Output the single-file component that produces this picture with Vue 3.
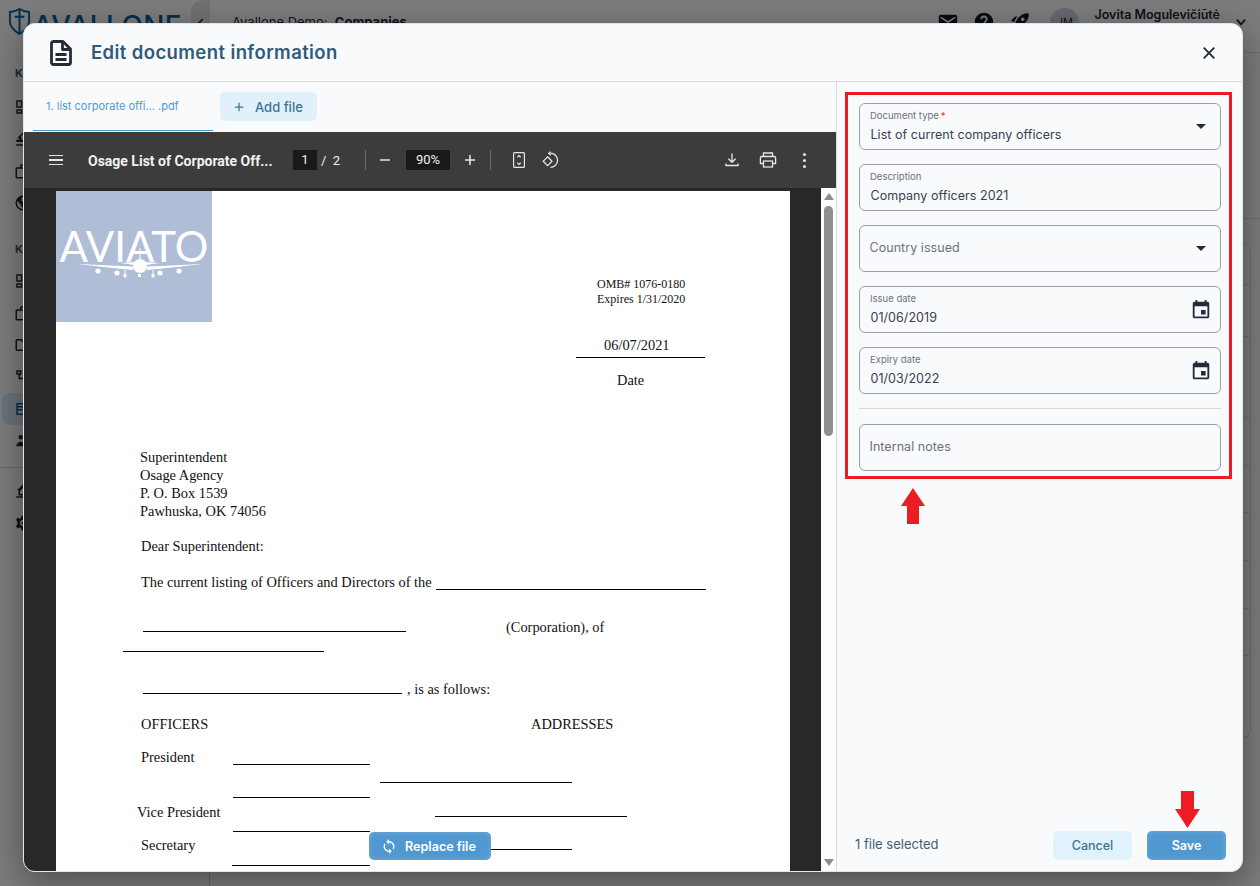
<script setup>
const icons = {
  grid: 'M19 5v2h-4V5h4M9 5v6H5V5h4m10 8v6h-4v-6h4M9 17v2H5v-2h4M21 3h-8v6h8V3zM11 3H3v10h8V3zm10 8h-8v10h8V11zm-10 4H3v6h8v-6z',
  edit: 'M12 3L4 11h3v2H3v3h18v-3h-4v-2h3zm0 3l3 3h-1v4h-4V9H9zM3 19h18v2H3z',
  case: 'M20 7h-4V5c0-1.1-.9-2-2-2h-4c-1.1 0-2 .9-2 2v2H4c-1.1 0-2 .9-2 2v11c0 1.1.9 2 2 2h16c1.1 0 2-.9 2-2V9c0-1.1-.9-2-2-2zM10 5h4v2h-4V5zm10 15H4V9h16v11z',
  globe: 'M12 2a10 10 0 1 0 0 20 10 10 0 0 0 0-20zm0 18a8 8 0 0 1-8-8c0-1 .2-2 .5-2.800L9 14v1c0 1.100.9 2 2 2zm1-16a8 8 0 0 1 6 3h-3v2l-3 2-3-2V5c1-.6 2-1 3-1z',
  folder: 'M20 6h-8l-2-2H4c-1.100 0-2 .9-2 2v12c0 1.100.9 2 2 2h16c1.100 0 2-.9 2-2V8c0-1.100-.9-2-2-2zm0 12H4V6h5.170l2 2H20v10z',
  tree: 'M3 3h7v6H3zm2 2v2h3V5zm9 6h7v6h-7zm2 2v2h3v-2zM6 9h2v4h6v2H6z',
  doc: 'M3 4h18v16H3zm2 2v2h14V6zm0 4v2h14v-2zm0 4v4h14v-4z',
  people: 'M9 4a3 3 0 1 1 0 6 3 3 0 0 1 0-6zm8 2a2.500 2.500 0 1 1 0 5 2.500 2.500 0 0 1 0-5zM3 19c0-3 3-6 6-6s6 3 6 6zm13 0c0-2-.5-4-2-5.500 3-1 7 1.500 7 5.500z',
  upload: 'M3 21h18v-2H3zM8 12l4-4 4 4v4H8zM12 3L4 11h2v7h12v-7h2z',
  gear: 'M12 8a4 4 0 1 0 0 8 4 4 0 0 0 0-8zm0 2a2 2 0 1 1 0 4 2 2 0 0 1 0-4zM10 2h4l.5 3 2 1 2.500-1.500 2.500 3.500-2 2v4l2 2-2.500 3.500L16.500 18l-2 1-.5 3h-4l-.5-3-2-1L5 19.500 2.500 16l2-2v-4l-2-2L5 4.500 7.500 6l2-1z'
}
const sideTop = ['grid', 'edit', 'case', 'globe']
const sideMid = ['grid', 'case', 'folder', 'tree', 'doc', 'people']
const sideBottom = ['upload', 'gear']
const backRows = [41, 52, 81, 48, 47, 48, 48, 47, 82]

const fields = [
  { label: 'Document type', value: 'List of current company officers', required: true, icon: 'caret' },
  { label: 'Description', value: 'Company officers 2021' },
  { placeholder: 'Country issued', icon: 'caret' },
  { label: 'Issue date', value: '01/06/2019', icon: 'date' },
  { label: 'Expiry date', value: '01/03/2022', icon: 'date' }
]

// pdf page content, coordinates on the page sheet
const pageTexts = [
  { s: 'OMB# 1076-0180', x: 541, y: 85, small: true },
  { s: 'Expires 1/31/2020', x: 541, y: 100, small: true },
  { s: '06/07/2021', x: 548, y: 146 },
  { s: 'Date', x: 561, y: 181 },
  { s: 'Superintendent', x: 84, y: 258 },
  { s: 'Osage Agency', x: 84, y: 276 },
  { s: 'P. O. Box 1539', x: 84, y: 294 },
  { s: 'Pawhuska, OK 74056', x: 84, y: 312 },
  { s: 'Dear Superintendent:', x: 85, y: 347 },
  { s: 'The current listing of Officers and Directors of the', x: 85, y: 383 },
  { s: '(Corporation), of', x: 450, y: 428 },
  { s: ', is as follows:', x: 351, y: 490 },
  { s: 'OFFICERS', x: 85, y: 525 },
  { s: 'ADDRESSES', x: 475, y: 525 },
  { s: 'President', x: 85, y: 558 },
  { s: 'Vice President', x: 81, y: 613 },
  { s: 'Secretary', x: 85, y: 646 }
]
const pageLines = [
  { x: 520, y: 166, w: 129 },
  { x: 380, y: 398, w: 270 },
  { x: 87, y: 440, w: 263 },
  { x: 67, y: 460, w: 201 },
  { x: 87, y: 502, w: 259 },
  { x: 177, y: 573, w: 137 },
  { x: 324, y: 591, w: 192 },
  { x: 177, y: 606, w: 137 },
  { x: 379, y: 625, w: 192 },
  { x: 177, y: 640, w: 137 },
  { x: 324, y: 658, w: 192 },
  { x: 176, y: 674, w: 138 }
]
</script>

<template>
  <div class="app">
    <aside class="sidebar">
      <div class="brand">
        <svg class="shield" viewBox="0 0 24 28" fill="none" stroke="currentColor" stroke-width="2">
          <path d="M2 4c4 0 7-1 10-3 3 2 6 3 10 3v10c0 6-5 10-10 13C7 24 2 20 2 14z" />
          <path d="M12 1v26M7 9h10" />
        </svg>
        <span>AVALLONE</span>
      </div>
      <div class="side-toggle">
        <svg viewBox="0 0 8 12" fill="none" stroke="#1f2937" stroke-width="1.800"><path d="M6.500 1L1.500 6l5 5" /></svg>
      </div>
      <div class="side-label">K</div>
      <div v-for="name in sideTop" :key="name" class="side-item">
        <svg viewBox="0 0 24 24"><path :d="icons[name]" /></svg>
      </div>
      <div class="side-label second">K</div>
      <div v-for="name in sideMid" :key="name" class="side-item" :class="{ current: name === 'doc' }">
        <svg viewBox="0 0 24 24"><path :d="icons[name]" /></svg>
      </div>
      <div class="side-rule"></div>
      <div v-for="name in sideBottom" :key="name" class="side-item">
        <svg viewBox="0 0 24 24"><path :d="icons[name]" /></svg>
      </div>
    </aside>

    <div class="main">
      <header class="topbar">
        <span class="crumb">Avallone Demo:&nbsp; <b>Companies</b></span>
        <div class="top-right">
          <svg class="top-icon" viewBox="0 0 24 24"><path d="M20 4H4c-1.100 0-1.990.9-1.990 2L2 18c0 1.100.9 2 2 2h16c1.100 0 2-.9 2-2V6c0-1.100-.9-2-2-2zm0 4l-8 5-8-5V6l8 5 8-5v2z" /></svg>
          <svg class="top-icon" viewBox="0 0 24 24"><path d="M12 2C6.480 2 2 6.480 2 12s4.480 10 10 10 10-4.480 10-10S17.520 2 12 2zm1 17h-2v-2h2v2zm2.070-7.750l-.9.920C13.450 12.900 13 13.500 13 15h-2v-.5c0-1.100.450-2.100 1.170-2.830l1.240-1.260c.370-.360.590-.860.590-1.410 0-1.100-.9-2-2-2s-2 .9-2 2H8c0-2.210 1.790-4 4-4s4 1.790 4 4c0 .880-.360 1.680-.930 2.250z" /></svg>
          <svg class="top-icon" viewBox="0 0 24 24"><path d="M9.190 6.350c-2.040 2.290-3.440 5.580-3.570 5.890L2 10.690l4.050-4.050c.470-.470 1.150-.680 1.810-.550l1.330.260zM11.170 17s3.740-1.550 5.890-3.700c5.400-5.400 4.500-9.620 4.210-10.570-.950-.300-5.170-1.190-10.570 4.210C8.550 9.090 7 12.830 7 12.830L11.170 17zm6.480-2.190c-2.290 2.040-5.580 3.440-5.890 3.570L13.310 22l4.050-4.050c.470-.470.680-1.150.550-1.810l-.260-1.330zM9 18c0 .830-.340 1.580-.880 2.120C6.940 21.300 2 22 2 22s.7-4.940 1.880-6.120C4.420 15.340 5.170 15 6 15c1.660 0 3 1.340 3 3zm4-9c0-1.100.9-2 2-2s2 .9 2 2-.9 2-2 2-2-.9-2-2z" /></svg>
          <span class="avatar">JM</span>
          <span class="user">Jovita Mogulevičiūtė</span>
          <svg class="chev" viewBox="0 0 24 24" fill="none" stroke="currentColor" stroke-width="3"><path d="M5 8l7 8 7-8" /></svg>
        </div>
      </header>
      <div class="back-rule"></div>
      <div class="back-rule lower"></div>
      <section class="back-card">
        <div v-for="(h, i) in backRows" :key="i" class="back-row" :style="{ height: h + 'px' }"></div>
      </section>
    </div>

    <div class="scrim">
      <div class="modal">
        <header class="modal-head">
          <svg class="doc-icon" viewBox="0 0 22 26" fill="none" stroke="#262b38" stroke-width="2.800" stroke-linejoin="round">
            <path d="M3.500 1.500h9.500l7.500 7.500v13.500a2 2 0 0 1-2 2h-15a2 2 0 0 1-2-2v-19a2 2 0 0 1 2-2z" />
            <path d="M12.500 1.500v8h8M5.500 14.500h11M5.500 19.500h11" />
          </svg>
          <h1>Edit document information</h1>
          <svg class="close" viewBox="0 0 12 12" fill="none" stroke="#232838" stroke-width="1.800"><path d="M.7.7l10.600 10.600M11.300.7L.7 11.300" /></svg>
        </header>

        <div class="modal-body">
          <div class="left">
            <div class="tabs">
              <div class="tab">1. list corporate offi... .pdf</div>
              <button class="add-file">
                <svg viewBox="0 0 12 12" fill="none" stroke="currentColor" stroke-width="1.500"><path d="M6 1v10M1 6h10" /></svg>
                Add file
              </button>
            </div>

            <div class="pdf-bar">
              <div class="burger"><i></i><i></i><i></i></div>
              <span class="pdf-title">Osage List of Corporate Off...</span>
              <span class="box page-box">1</span>
              <span class="page-of">/&nbsp; 2</span>
              <span class="bar-sep first"></span>
              <svg class="bar-icon minus" viewBox="0 0 12 12" stroke="#e6e6e6" stroke-width="1.600"><path d="M1 6h10" /></svg>
              <span class="box zoom-box">90%</span>
              <svg class="bar-icon plus" viewBox="0 0 12 12" stroke="#e6e6e6" stroke-width="1.600"><path d="M1 6h10M6 1v10" /></svg>
              <span class="bar-sep second"></span>
              <svg class="bar-icon fit" viewBox="0 0 14 18" fill="none" stroke="#e6e6e6" stroke-width="1.200">
                <rect x="1.600" y="1.600" width="10.800" height="14.800" rx="1" />
                <path d="M5.300 6.200L7 4.600l1.700 1.600M5.300 11.800L7 13.400l1.700-1.600" />
              </svg>
              <svg class="bar-icon rotate" viewBox="0 0 18 18" fill="none" stroke="#e6e6e6" stroke-width="1.300">
                <path d="M5.600 5.800L10 10.200 5.600 14.600 1.200 10.200z" />
                <path d="M8.400 2.200A7 7 0 1 1 8.500 16.400M8.600.6L6.800 2.500l2.200 1.700" />
              </svg>
              <span class="bar-gap"></span>
              <svg class="bar-icon save" viewBox="0 0 14 14" fill="none" stroke="#e6e6e6" stroke-width="1.300">
                <path d="M7 .5v8.500M3.400 5.800L7 9.300l3.600-3.500M1 10.500v2h12v-2" />
              </svg>
              <svg class="bar-icon print" viewBox="0 0 18 16" fill="none" stroke="#e6e6e6" stroke-width="1.300">
                <path d="M4.500 4.500V1h9v3.500M4.500 11.500H1.400V5.700a1.200 1.200 0 0 1 1.200-1.200h12.800a1.200 1.200 0 0 1 1.200 1.200v5.800h-3.100" />
                <rect x="4.500" y="9" width="9" height="6" />
              </svg>
              <div class="dots"><i></i><i></i><i></i></div>
            </div>

            <div class="viewer">
              <div class="sheet-area">
                <div class="sheet">
                  <div class="aviato">
                    <span>AVIATO</span>
                    <svg viewBox="0 0 124 22" fill="#fff">
                      <path d="M0 5C20 6 42 7 55 7.500V11C42 10 20 7.500 0 5zM124 5C104 6 82 7 69 7.500V11C82 10 104 7.500 124 5z" />
                      <circle cx="62" cy="7" r="7" />
                      <path d="M42 4l15-1v3zM82 4l-15-1v3z" />
                      <rect x="61.500" y="-11" width="1" height="12" />
                      <circle cx="20" cy="12" r="2.600" /><circle cx="39" cy="14" r="2.600" />
                      <circle cx="82" cy="14" r="2.600" /><circle cx="101" cy="12" r="2.600" />
                      <rect x="46.500" y="11" width="1" height="8" /><rect x="74.500" y="11" width="1" height="8" />
                      <rect x="45.500" y="15" width="3" height="3" /><rect x="73.500" y="15" width="3" height="3" /><rect x="60" y="15" width="3" height="3" />
                    </svg>
                  </div>
                  <span
                    v-for="t in pageTexts"
                    :key="t.s"
                    class="doc-text"
                    :class="{ small: t.small }"
                    :style="{ left: t.x + 'px', top: t.y + 'px' }"
                  >{{ t.s }}</span>
                  <i
                    v-for="l in pageLines"
                    :key="l.x + '-' + l.y"
                    class="doc-line"
                    :style="{ left: l.x + 'px', top: l.y + 'px', width: l.w + 'px' }"
                  ></i>
                </div>
              </div>
              <div class="scrollbar">
                <i class="arrow up"></i>
                <i class="thumb"></i>
                <i class="arrow down"></i>
              </div>
              <button class="replace">
                <svg viewBox="4 1 16 22" fill="#fff"><path d="M12 4V1L8 5l4 4V6c3.310 0 6 2.690 6 6 0 1.010-.250 1.970-.7 2.800l1.460 1.460C19.540 15.030 20 13.570 20 12c0-4.420-3.580-8-8-8zm0 14c-3.310 0-6-2.690-6-6 0-1.010.250-1.970.7-2.800L5.240 7.740C4.460 8.970 4 10.430 4 12c0 4.420 3.580 8 8 8v3l4-4-4-4v3z" /></svg>
                Replace file
              </button>
            </div>
          </div>

          <div class="right">
            <div class="form-box">
              <div v-for="f in fields" :key="f.label || f.placeholder" class="field">
                <div class="field-text">
                  <template v-if="f.label">
                    <span class="field-label">{{ f.label }}<em v-if="f.required">*</em></span>
                    <span class="field-value">{{ f.value }}</span>
                  </template>
                  <span v-else class="field-placeholder">{{ f.placeholder }}</span>
                </div>
                <i v-if="f.icon === 'caret'" class="caret"></i>
                <svg v-if="f.icon === 'date'" class="date-icon" viewBox="0 0 24 24" fill="#232a3a">
                  <path d="M17 12h-5v5h5v-5zM16 1v2H8V1H6v2H5c-1.110 0-1.990.9-1.990 2L3 19c0 1.100.890 2 2 2h14c1.100 0 2-.9 2-2V5c0-1.100-.9-2-2-2h-1V1h-2zm3 18H5V8h14v11z" />
                </svg>
              </div>
              <div class="form-rule"></div>
              <div class="field">
                <div class="field-text"><span class="field-placeholder">Internal notes</span></div>
              </div>
            </div>

            <footer class="foot">
              <span class="count">1 file selected</span>
              <button class="btn cancel">Cancel</button>
              <button class="btn primary">Save</button>
            </footer>
          </div>
        </div>

        <svg class="red-arrow arrow-up" viewBox="0 0 24 36" fill="#ed1c24"><path d="M12 0l12 18h-6v18H6V18H0z" /></svg>
        <svg class="red-arrow arrow-down" viewBox="0 0 25 37" fill="#ed1c24"><path d="M6 0h13v18h6L12.500 37 0 18h6z" /></svg>
      </div>
    </div>
  </div>
</template>

<style scoped>
.app {
  position: relative;
  display: flex;
  height: 886px;
  overflow: hidden;
  background: #f8f9fb;
  font-family: Inter, "Liberation Sans", sans-serif;
  color: #1f2937;
}

.sidebar {
  position: relative;
  width: 209px;
  border-right: 1px solid #c8ccd0;
  flex-shrink: 0;
}

.brand {
  display: flex;
  gap: 2px;
  height: 66px;
  box-sizing: border-box;
  padding: 8px 0 0 8px;
  color: #0a5f94;
  font-size: 28px;
  font-weight: 500;
  line-height: 36px;
  letter-spacing: 0.4px;
}

.shield {
  width: 23px;
  height: 27px;
}

.side-toggle {
  position: absolute;
  top: 0;
  right: -1px;
  display: flex;
  align-items: center;
  justify-content: center;
  width: 19px;
  height: 38px;
  padding-top: 8px;
  box-sizing: border-box;
  border-radius: 12px 0 0 12px;
  background: #dfe1e4;
}

.side-toggle svg {
  width: 7px;
  height: 11px;
}

.side-label {
  height: 14px;
  margin: 0 0 11px 15px;
  font-size: 11px;
  line-height: 14px;
  font-weight: 700;
  color: #4b5563;
}

.side-label.second {
  margin-top: 23px;
  margin-bottom: 9px;
}

.side-item {
  display: flex;
  align-items: center;
  height: 32px;
  margin: 0 8px 0 2px;
  padding-left: 12px;
  border-radius: 8px;
}

.side-item svg {
  width: 18px;
  height: 18px;
  fill: #1f2937;
}

.side-item.current {
  background: #d4e6f2;
}

.side-item.current svg {
  fill: #0a5f94;
}

.side-rule {
  height: 1px;
  margin: 10px 0 7px;
  background: #c8ccd0;
}

.main {
  flex: 1;
  min-width: 0;
}

.topbar {
  display: flex;
  justify-content: space-between;
  align-items: center;
  height: 44px;
  padding: 0 12px 0 22px;
  font-size: 13px;
}

.top-right {
  display: flex;
  align-items: center;
  gap: 14px;
}

.top-icon {
  width: 22px;
  height: 22px;
  fill: #111827;
}

.avatar {
  display: flex;
  align-items: center;
  justify-content: center;
  width: 29px;
  height: 29px;
  margin-left: 5px;
  border-radius: 50%;
  background: #cbd0d8;
  font-size: 11px;
}

.user {
  margin: -16px 0 0 1px;
  font-size: 12.5px;
  font-weight: 600;
}

.chev {
  width: 14px;
  height: 14px;
}

.back-rule {
  height: 1px;
  margin-top: 8px;
  background: #d8dade;
}

.back-rule.lower {
  margin-top: 165px;
}

.back-card {
  width: 1009px;
  margin: 24px 0 0 30px;
  border: 1px solid #d8dade;
  border-radius: 10px;
}

.back-row {
  box-sizing: border-box;
  border-bottom: 1px solid #d8dade;
}

.scrim {
  position: absolute;
  inset: 0;
  padding: 23px 17px 14px 23px;
  background: rgba(0, 0, 0, 0.5);
}

.modal {
  position: relative;
  display: flex;
  flex-direction: column;
  height: 100%;
  box-sizing: border-box;
  border: 1px solid #e3e5e9;
  border-radius: 12px;
  overflow: hidden;
  background: #f9fafc;
  box-shadow: 0 10px 34px rgba(0, 0, 0, 0.38);
}

.modal-head {
  display: flex;
  align-items: center;
  height: 57px;
  flex-shrink: 0;
  padding: 0 27px 0 26px;
  border-bottom: 1px solid #d7d9de;
}

.doc-icon {
  width: 22px;
  height: 26px;
}

h1 {
  flex: 1;
  margin: 0 0 2px 19px;
  font-size: 18.5px;
  font-weight: 600;
  letter-spacing: 0.4px;
  color: #2f5a78;
}

.close {
  width: 12px;
  height: 12px;
}

.modal-body {
  display: flex;
  flex: 1;
  min-height: 0;
}

.left {
  display: flex;
  flex-direction: column;
  width: 812px;
  flex-shrink: 0;
  border-right: 1px solid #d7dbe4;
}

.tabs {
  display: flex;
  gap: 7px;
  height: 50px;
  flex-shrink: 0;
  padding-left: 9px;
  box-sizing: border-box;
}

.tab {
  width: 180px;
  height: 49px;
  box-sizing: border-box;
  padding: 17px 0 0 13px;
  border-bottom: 1px solid #4f9bd6;
  font-size: 11px;
  color: #4f9bd6;
}

.add-file {
  display: flex;
  align-items: center;
  gap: 11px;
  height: 29px;
  margin-top: 10px;
  padding: 0 14px;
  border: 0;
  border-radius: 5px;
  background: #e0f1fc;
  font: 500 13px Inter, sans-serif;
  color: #3f7396;
}

.add-file svg {
  width: 10px;
  height: 10px;
}

.pdf-bar {
  position: relative;
  display: flex;
  align-items: center;
  height: 56px;
  flex-shrink: 0;
  padding: 0 30px 0 25px;
  background: #3c3c3c;
  color: #f1f1f1;
  font-family: Roboto, sans-serif;
  font-size: 13px;
}

.burger {
  display: flex;
  flex-direction: column;
  gap: 3px;
  width: 14px;
}

.burger i {
  height: 1.5px;
  background: #e6e6e6;
}

.pdf-title {
  width: 205px;
  margin: 1px 0 0 25px;
  font-size: 14px;
  font-weight: 700;
}

.box {
  height: 20px;
  line-height: 20px;
  text-align: center;
  background: #191919;
}

.page-box {
  width: 24px;
}

.page-of {
  width: 24px;
  margin-left: 4px;
  white-space: nowrap;
}

.bar-sep {
  width: 1px;
  height: 20px;
  background: #6b6b6b;
}

.bar-sep.first {
  margin-left: 20px;
}

.bar-sep.second {
  margin-left: 14px;
}

.bar-icon {
  flex-shrink: 0;
}

.minus {
  width: 12px;
  height: 12px;
  margin-left: 13px;
}

.zoom-box {
  width: 44px;
  margin-left: 15px;
}

.plus {
  width: 12px;
  height: 12px;
  margin-left: 14px;
}

.fit {
  width: 14px;
  height: 18px;
  margin-left: 21px;
}

.rotate {
  width: 18px;
  height: 18px;
  margin-left: 16px;
}

.bar-gap {
  flex: 1;
}

.save {
  width: 14px;
  height: 14px;
}

.print {
  width: 18px;
  height: 16px;
  margin-left: 20px;
}

.dots {
  display: flex;
  flex-direction: column;
  gap: 3px;
  margin-left: 26px;
}

.dots i {
  width: 3px;
  height: 3px;
  border-radius: 50%;
  background: #e6e6e6;
}

.viewer {
  position: relative;
  display: flex;
  flex: 1;
  min-height: 0;
}

.sheet-area {
  flex: 1;
  padding: 3px 31px 0 32px;
  overflow: hidden;
  background: #282828;
}

.sheet {
  position: relative;
  width: 734px;
  height: 900px;
  background: #fff;
  font-family: "Liberation Serif", serif;
  color: #111;
}

.aviato {
  width: 156px;
  height: 131px;
  box-sizing: border-box;
  padding-top: 32px;
  background: #afbdd7;
  color: #fff;
  text-align: center;
  overflow: hidden;
}

.aviato span {
  display: block;
  font: 400 42px/46px Lato, sans-serif;
}

.aviato svg {
  display: block;
  width: 124px;
  height: 22px;
  margin: -10px 0 0 22px;
  overflow: visible;
}

.doc-text {
  position: absolute;
  font-size: 14.4px;
  line-height: 16px;
  white-space: nowrap;
}

.doc-text.small {
  font-size: 12px;
}

.doc-line {
  position: absolute;
  height: 1px;
  background: #000;
}

.scrollbar {
  position: relative;
  display: flex;
  flex-direction: column;
  align-items: center;
  width: 15px;
  flex-shrink: 0;
  background: #fdfdfd;
}

.arrow {
  position: absolute;
  width: 0;
  height: 0;
  border-left: 5px solid transparent;
  border-right: 5px solid transparent;
}

.arrow.up {
  top: 5px;
  border-bottom: 7px solid #8c8c8c;
}

.arrow.down {
  bottom: 5px;
  border-top: 7px solid #8c8c8c;
}

.thumb {
  width: 9px;
  height: 230px;
  margin-top: 18px;
  border-radius: 5px;
  background: #8f8f8f;
}

.replace {
  position: absolute;
  left: 345px;
  bottom: 11px;
  display: flex;
  align-items: center;
  gap: 10px;
  width: 122px;
  height: 28px;
  padding: 0 0 0 14px;
  border: 0;
  border-radius: 5px;
  background: #5098d0;
  box-shadow: inset 0 0 6px rgba(255, 255, 255, 0.18);
  font: 600 12.6px Inter, sans-serif;
  color: #fff;
}

.replace svg {
  width: 12px;
  height: 15px;
}

.right {
  display: flex;
  flex-direction: column;
  flex: 1;
  min-width: 0;
}

.form-box {
  display: flex;
  flex-direction: column;
  gap: 14px;
  width: 387px;
  box-sizing: border-box;
  margin: 10px 0 0 8px;
  padding: 8px 8px 5px 11px;
  border: 3px solid #ed1c24;
}

.field {
  display: flex;
  align-items: center;
  height: 47px;
  box-sizing: border-box;
  padding: 0 10px 2px;
  border: 1px solid #9a9fb0;
  border-radius: 6px;
}

.field-text {
  display: flex;
  flex: 1;
  flex-direction: column;
  min-width: 0;
}

.field-label {
  margin-top: 2px;
  font-size: 9.5px;
  line-height: 12px;
  color: #6b7280;
}

.field-label em {
  margin-left: 2px;
  font-style: normal;
  color: #ed1c24;
}

.field-value {
  margin: 5px 0 0 0.5px;
  font-size: 12.5px;
  line-height: 16px;
  letter-spacing: 0.05px;
  color: #374151;
}

.field-placeholder {
  margin-left: -0.5px;
  font-size: 12.5px;
  letter-spacing: 0.05px;
  color: #6b7280;
}

.caret {
  width: 0;
  height: 0;
  margin: 2px 4px 0 0;
  border-top: 5px solid #232a3a;
  border-left: 5px solid transparent;
  border-right: 5px solid transparent;
}

.date-icon {
  width: 22px;
  height: 22px;
  margin: 2px -2px 0 0;
}

.form-rule {
  height: 1px;
  margin-bottom: 1px;
  background: #d7d9de;
}

.foot {
  display: flex;
  align-items: center;
  margin-top: auto;
  padding: 0 16px 11px 18px;
}

.count {
  flex: 1;
  margin-bottom: 4px;
  font-size: 13px;
  color: #3f6078;
}

.btn {
  width: 79px;
  height: 29px;
  border: 0;
  border-radius: 5px;
  font: 500 12.5px Inter, sans-serif;
}

.cancel {
  background: #e2f2fc;
  color: #3f7396;
}

.primary {
  margin-left: 15px;
  background: #5098d0;
  box-shadow: inset 0 0 6px rgba(255, 255, 255, 0.18);
  color: #fff;
  font-weight: 600;
}

.red-arrow {
  position: absolute;
}

.arrow-up {
  left: 877px;
  top: 464px;
  width: 24px;
  height: 36px;
}

.arrow-down {
  left: 1151px;
  top: 767px;
  width: 25px;
  height: 37px;
}
</style>

<style>
body {
  overflow: hidden;
}
</style>
